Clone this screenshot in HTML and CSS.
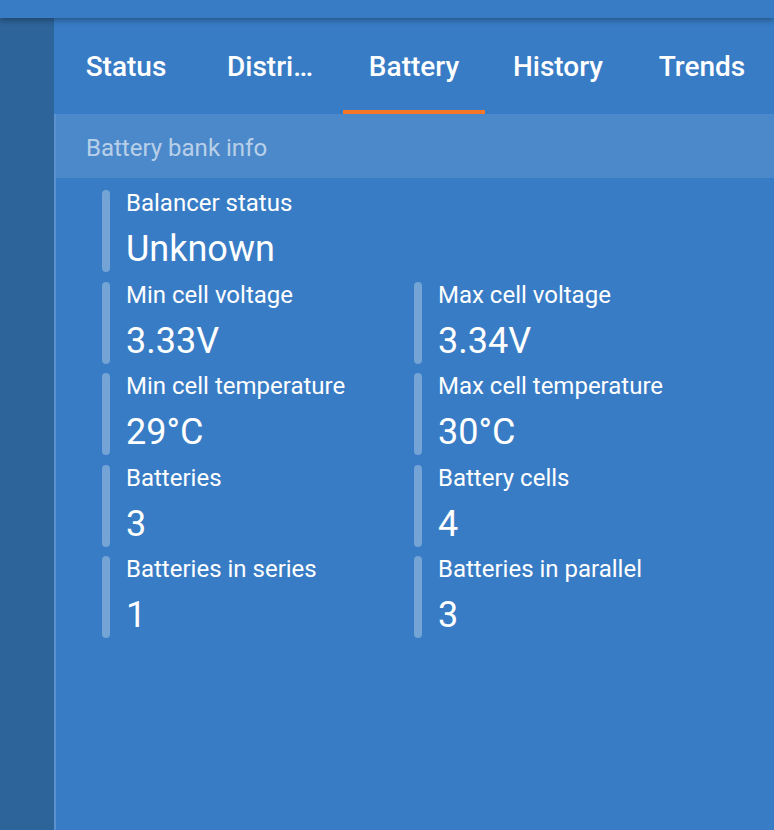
FILE: index.html
```
<!DOCTYPE html>
<html lang="en">
<head>
  <meta charset="UTF-8" />
  <meta name="viewport" content="width=device-width, initial-scale=1.0" />
  <title>Battery</title>
  <link rel="stylesheet" href="styles.css">
</head>
<body>
  <div class="topbar"></div>
  <div class="app">
    <div class="sidebar"></div>
    <div class="main">
      <div class="tabs">
        <div class="tab"><span>Status</span><div class="tab-line"></div></div>
        <div class="tab"><span>Distri…</span><div class="tab-line"></div></div>
        <div class="tab active"><span>Battery</span><div class="tab-line"></div></div>
        <div class="tab"><span>History</span><div class="tab-line"></div></div>
        <div class="tab"><span>Trends</span><div class="tab-line"></div></div>
      </div>

      <div class="content">
        <div class="section-title">Battery bank info</div>
        <div class="grid">
          <div class="item wide">
            <div class="bar"></div>
            <div class="text"><div class="label">Balancer status</div><div class="value">Unknown</div></div>
          </div>
          <div class="item">
            <div class="bar"></div>
            <div class="text"><div class="label">Min cell voltage</div><div class="value">3.33V</div></div>
          </div>
          <div class="item">
            <div class="bar"></div>
            <div class="text"><div class="label">Max cell voltage</div><div class="value">3.34V</div></div>
          </div>
          <div class="item">
            <div class="bar"></div>
            <div class="text"><div class="label">Min cell temperature</div><div class="value">29°C</div></div>
          </div>
          <div class="item">
            <div class="bar"></div>
            <div class="text"><div class="label">Max cell temperature</div><div class="value">30°C</div></div>
          </div>
          <div class="item">
            <div class="bar"></div>
            <div class="text"><div class="label">Batteries</div><div class="value">3</div></div>
          </div>
          <div class="item">
            <div class="bar"></div>
            <div class="text"><div class="label">Battery cells</div><div class="value">4</div></div>
          </div>
          <div class="item">
            <div class="bar"></div>
            <div class="text"><div class="label">Batteries in series</div><div class="value">1</div></div>
          </div>
          <div class="item">
            <div class="bar"></div>
            <div class="text"><div class="label">Batteries in parallel</div><div class="value">3</div></div>
          </div>
        </div>
      </div>
    </div>
  </div>
</body>
</html>
```

FILE: styles.css
```
html, body {
  height: 100%;
}

body {
  margin: 0;
  background-color: #387cc5;
  font-family: Roboto, 'Noto Sans', sans-serif;
  color: #ffffff;
  overflow: hidden;
}

.topbar {
  height: 18px;
  background-color: #387cc5;
  box-shadow: 0 2px 6px rgba(0, 0, 0, 0.35);
  position: relative;
  z-index: 1;
}

.app {
  display: flex;
  height: calc(100% - 18px);
}

.sidebar {
  width: 54px;
  flex: none;
  background-color: #2d6499;
}

.main {
  flex: 1;
  display: flex;
  flex-direction: column;
  min-width: 0;
}

.tabs {
  display: flex;
  height: 96px;
  flex: none;
}

.tab {
  width: 144px;
  flex: none;
  display: flex;
  flex-direction: column;
}

.tab span {
  flex: 1;
  display: flex;
  align-items: center;
  justify-content: center;
  font-size: 28px;
  font-weight: 500;
  padding-top: 4px;
  white-space: nowrap;
}

.tab-line {
  height: 4px;
  margin: 0 1px;
}

.tab.active .tab-line {
  background-color: #f7772a;
}

.content {
  flex: 1;
  border-left: 2px solid #5a92d0;
}

.section-title {
  height: 64px;
  line-height: 68px;
  padding-left: 30px;
  background-color: rgba(255, 255, 255, 0.1);
  color: rgba(255, 255, 255, 0.62);
  font-size: 24px;
}

.grid {
  display: grid;
  grid-template-columns: 312px 312px;
  grid-auto-rows: 82px;
  row-gap: 9.5px;
  padding: 12px 0 0 46px;
}

.item {
  display: flex;
  gap: 16px;
}

.item.wide {
  grid-column: 1 / 3;
}

.bar {
  width: 8px;
  flex: none;
  border-radius: 4px;
  background-color: rgba(255, 255, 255, 0.3);
}

.label {
  font-size: 24px;
  line-height: 27px;
}

.value {
  font-size: 36px;
  line-height: 44px;
  margin-top: 10px;
}
```
